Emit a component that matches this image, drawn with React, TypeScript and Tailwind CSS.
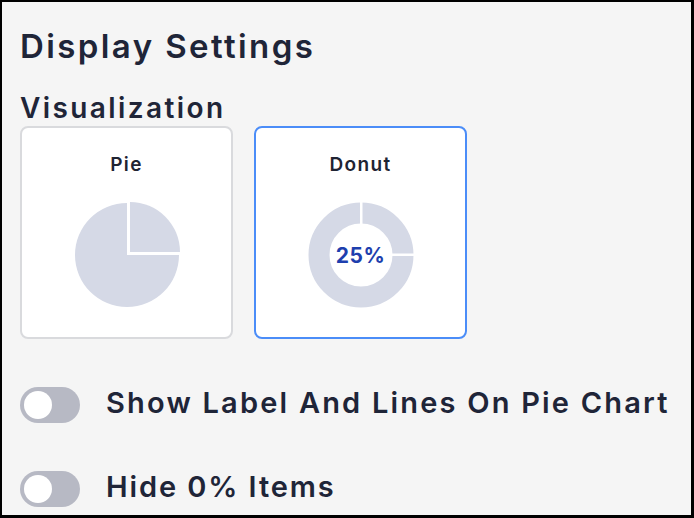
import React from 'react';

const font = { fontFamily: 'Inter, "Noto Sans", sans-serif' };

function PieIcon() {
  return (
    <svg width="112" height="112" viewBox="0 0 112 112" className="overflow-visible">
      <path d="M56 56 L56 4 A52 52 0 1 0 108 56 Z" fill="#d5d9e6" />
      <path d="M59 53 L59 3 A50 50 0 0 1 109 53 Z" fill="#d5d9e6" />
    </svg>
  );
}

function DonutIcon() {
  return (
    <div className="relative w-[112px] h-[112px]">
      <svg width="112" height="112" viewBox="0 0 112 112">
        <circle cx="56" cy="56" r="42" fill="none" stroke="#d5d9e6" strokeWidth="21" />
        <rect x="55" y="0" width="2.5" height="28" fill="#ffffff" />
        <rect x="84" y="54.5" width="28" height="2.5" fill="#ffffff" />
      </svg>
      <div className="absolute inset-0 flex items-center justify-center">
        <span className="text-[21px] font-bold tracking-[0.5px] text-[#1e3fae] leading-none">25%</span>
      </div>
    </div>
  );
}

function ChartCard({ label, selected, children }: { label: string; selected?: boolean; children: React.ReactNode }) {
  return (
    <div
      className={`w-[213px] h-[213px] bg-white rounded-[8px] border-2 flex flex-col items-center pt-[25px] ${
        selected ? 'border-[#4b8df8]' : 'border-[#d9dadd]'
      }`}
    >
      <div className="text-[19px] leading-[24px] font-semibold tracking-[0.07em] text-[#1f2433]">{label}</div>
      <div className="mt-[22px]">{children}</div>
    </div>
  );
}

function Toggle() {
  return (
    <div className="w-[60px] h-[36px] rounded-full bg-[#b7b9c4] flex items-center px-[4px] shrink-0">
      <div className="w-[28px] h-[28px] rounded-full bg-white" />
    </div>
  );
}

export default function App() {
  return (
    <div
      className="w-[694px] h-[518px] bg-[#f5f5f5] border-black border-t-2 border-l-2 border-r-[3px] border-b-[3px] px-[18px] pt-[24px] text-[#1f2538]"
      style={font}
    >
      <h1 className="text-[33px] leading-[40px] font-semibold tracking-[2.4px]">Display Settings</h1>
      <h2 className="text-[28px] leading-[34px] font-semibold tracking-[2.4px] mt-[25px]">Visualization</h2>
      <div className="flex gap-[21px] mt-[1px]">
        <ChartCard label="Pie">
          <PieIcon />
        </ChartCard>
        <ChartCard label="Donut" selected>
          <DonutIcon />
        </ChartCard>
      </div>
      <div className="flex items-center gap-[26px] mt-[46px]">
        <Toggle />
        <span className="text-[29px] leading-[36px] font-semibold tracking-[2.2px] mb-[4px]">
          Show Label And Lines On Pie Chart
        </span>
      </div>
      <div className="flex items-center gap-[26px] mt-[44px]">
        <Toggle />
        <span className="text-[29px] leading-[36px] font-semibold tracking-[1.9px] mb-[4px]">Hide 0% Items</span>
      </div>
    </div>
  );
}
